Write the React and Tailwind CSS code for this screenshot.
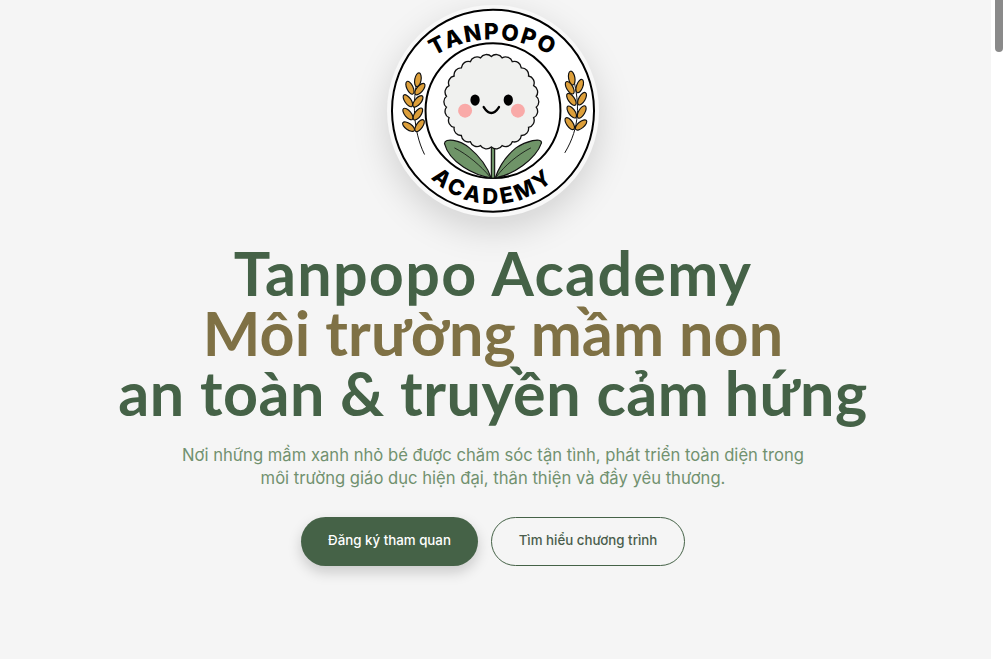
import React from "react";

// scalloped flower head, built once from the number of petals
const scallopPath = (cx, cy, r, count) => {
  let d = "";
  for (let i = 0; i <= count; i++) {
    const a = (i / count) * Math.PI * 2 - Math.PI / 2;
    const x = (cx + r * Math.cos(a)).toFixed(1);
    const y = (cy + r * Math.sin(a)).toFixed(1);
    d += i === 0 ? `M${x} ${y}` : ` A21 21 0 0 1 ${x} ${y}`;
  }
  return d + "Z";
};

const Grain = ({ x, y, angle }) => (
  <ellipse
    cx={x}
    cy={y}
    rx="9.5"
    ry="21"
    transform={`rotate(${angle} ${x} ${y})`}
    fill="#dd9f3a"
    stroke="#111"
    strokeWidth="3.5"
  />
);

const leftGrains = [
  [115, 240, 10],
  [91, 264, -25],
  [121, 268, 40],
  [85, 303, -35],
  [115, 305, 40],
  [85, 343, -40],
  [115, 343, 35],
  [87, 381, -55],
  [120, 378, 35],
];

const rightGrains = [
  [578, 235, -10],
  [572, 264, -30],
  [602, 259, 20],
  [577, 299, -35],
  [609, 297, 30],
  [578, 337, -35],
  [608, 337, 30],
  [572, 372, -35],
  [606, 376, 50],
];

const Logo = () => (
  <svg viewBox="22 15 638 638" className="w-full h-full">
    <circle cx="341" cy="333" r="304" fill="#fff" stroke="#000" strokeWidth="6" />
    <circle cx="341" cy="333" r="203" fill="#fff" stroke="#000" strokeWidth="6" />
    <defs>
      <path id="arcTop" d="M0 460 A341 341 0 0 1 682 460" />
      <path id="arcBottom" d="M79 352 A262 262 0 0 0 603 352" />
    </defs>
    <text fontFamily="Inter, sans-serif" fontWeight="800" fontSize="68" fill="#000" letterSpacing="5">
      <textPath href="#arcTop" startOffset="50%" textAnchor="middle">
        TANPOPO
      </textPath>
    </text>
    <text fontFamily="Inter, sans-serif" fontWeight="800" fontSize="66" fill="#000" letterSpacing="10">
      <textPath href="#arcBottom" startOffset="50%" textAnchor="middle">
        ACADEMY
      </textPath>
    </text>

    {/* wheat */}
    <path d="M113 240 C100 300 98 390 135 465" fill="none" stroke="#111" strokeWidth="3" />
    <path d="M584 240 C600 310 605 380 557 460" fill="none" stroke="#111" strokeWidth="3" />
    {leftGrains.map(([x, y, a]) => (
      <Grain key={`${x}-${y}`} x={x} y={y} angle={a} />
    ))}
    {rightGrains.map(([x, y, a]) => (
      <Grain key={`${x}-${y}`} x={x} y={y} angle={a} />
    ))}

    {/* stem and leaves */}
    <rect x="336" y="440" width="10" height="96" fill="#6f9468" stroke="#111" strokeWidth="3.5" />
    <path
      d="M335 535 C285 528 210 490 195 432 C196 414 240 420 270 445 C300 470 325 505 335 535Z"
      fill="#6f9468"
      stroke="#111"
      strokeWidth="3.5"
    />
    <path d="M225 445 C265 465 305 500 332 532" fill="none" stroke="#111" strokeWidth="2.5" />
    <path
      d="M348 535 C398 528 470 480 487 430 C488 412 440 425 410 445 C380 470 358 505 348 535Z"
      fill="#6f9468"
      stroke="#111"
      strokeWidth="3.5"
    />
    <path d="M455 445 C415 465 375 500 351 532" fill="none" stroke="#111" strokeWidth="2.5" />

    {/* flower head */}
    <path d={scallopPath(336, 306, 136, 26)} fill="#f0f1ef" stroke="#111" strokeWidth="4" />
    <ellipse cx="287" cy="301" rx="14" ry="17" fill="#000" />
    <ellipse cx="387" cy="301" rx="14" ry="17" fill="#000" />
    <circle cx="257" cy="333" r="21" fill="#f9aaa8" />
    <circle cx="416" cy="333" r="21" fill="#f9aaa8" />
    <path d="M313 322 Q336 358 359 322" fill="none" stroke="#000" strokeWidth="7" strokeLinecap="round" />
  </svg>
);

const App = () => {
  return (
    <div className="flex h-[659px] overflow-hidden bg-[#f5f5f5] font-['Inter',sans-serif]">
      <main className="flex-1 flex flex-col items-center pt-[5px] pr-[5px]">
        <div className="w-[212px] h-[212px] rounded-full bg-[#f8f8f8] overflow-hidden shadow-[0_12px_36px_rgba(0,0,0,0.15)] shrink-0">
          <Logo />
        </div>

        <h1 className="mt-[26px] text-center text-[61px] leading-[60px] font-bold text-[#456247] font-['Lato',sans-serif]">
          <span className="block tracking-[1.3px]">Tanpopo Academy</span>
          <span className="block tracking-[0.1px] text-[#7f7145]">Môi trường mầm non</span>
          <span className="block tracking-[0.5px]">an toàn &amp; truyền cảm hứng</span>
        </h1>

        <p className="mt-[21px] text-center text-[16.64px] leading-[23px] text-[#71916f]">
          Nơi những mầm xanh nhỏ bé được chăm sóc tận tình, phát triển toàn diện trong
          <br />
          môi trường giáo dục hiện đại, thân thiện và đầy yêu thương.
        </p>

        <div className="mt-[27px] flex gap-[13px]">
          <button className="w-[177px] h-[49px] pb-[2px] rounded-full bg-[#456247] text-white text-[13.3px] font-medium shadow-[0_6px_14px_rgba(0,0,0,0.18)]">
            Đăng ký tham quan
          </button>
          <button className="w-[194px] h-[49px] pb-[2px] rounded-full border border-[#456247] text-[#4a5d4c] text-[13.3px] font-medium">
            Tìm hiểu chương trình
          </button>
        </div>
      </main>

      {/* scrollbar */}
      <aside className="w-[15px] shrink-0 bg-white flex justify-center">
        <div className="w-[8px] h-[52px] rounded-b-full bg-[#8a8a8a]" />
      </aside>
    </div>
  );
};

export default App;
